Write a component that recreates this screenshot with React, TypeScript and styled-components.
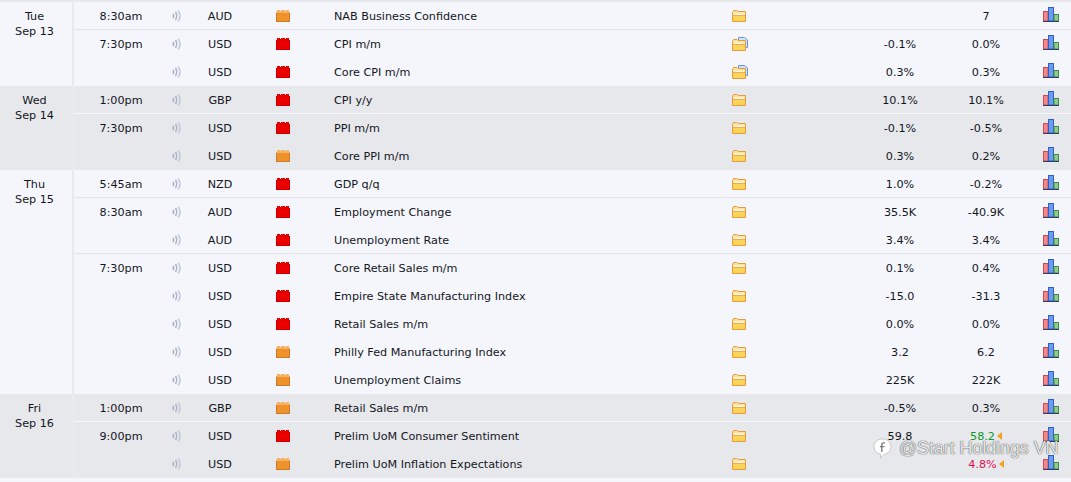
import styled, { createGlobalStyle } from 'styled-components';

const GlobalStyle = createGlobalStyle`
  html, body {
    margin: 0;
    padding: 0;
    width: 1071px;
    height: 482px;
    overflow: hidden;
    background: #f5f6fb;
  }
`;

const Page = styled.div`
  position: relative;
  width: 1071px;
  height: 482px;
  overflow: hidden;
  padding-top: 2px;
  box-sizing: border-box;
  background: #f5f6fb;
  color: #14161e;
  font-family: 'DejaVu Sans', sans-serif;
  font-size: 11.2px;
`;

const TopStrip = styled.div`
  position: absolute;
  top: 0;
  left: 0;
  right: 0;
  height: 2px;
  background: #e7e8ec;
`;

const DayGroup = styled.section<{ $dark?: boolean }>`
  display: flex;
  background: ${p => (p.$dark ? '#e7e8ec' : '#f5f6fb')};
`;

const DayCell = styled.div`
  box-sizing: border-box;
  width: 74px;
  flex: none;
  padding-top: 7px;
  padding-right: 3px;
  border-right: 2px solid #e9eaf0;
  text-align: center;
  line-height: 15px;
`;

const Slots = styled.div`
  flex: 1;
`;

const TimeGroup = styled.div<{ $dark?: boolean; $divided?: boolean }>`
  ${p =>
    p.$divided
      ? `border-top: 1px solid ${p.$dark ? '#f7f8fc' : '#e3e4ea'}; margin-top: -1px;`
      : ''}
`;

const Row = styled.div`
  display: grid;
  grid-template-columns: 94px 16px 72px 78px 398px 132px 72px 100px 1fr;
  align-items: center;
  height: 28px;
`;

const Time = styled.div`
  text-align: center;
  white-space: nowrap;
`;

const Centered = styled.div`
  display: flex;
  justify-content: center;
  align-items: center;
  white-space: nowrap;
`;

const ImpactCell = styled.div`
  display: flex;
  padding-left: 20px;
`;

const Name = styled.div`
  white-space: nowrap;
`;

const IconCell = styled.div`
  display: flex;
  align-items: center;
`;

const ChartCell = styled(IconCell)`
  padding-left: 7px;
  margin-top: -4px;
`;

const Forecast = styled(Centered)<{ $tone?: string }>`
  color: ${p => p.$tone || 'inherit'};
`;

const Arrow = styled.span`
  width: 0;
  height: 0;
  margin-left: 2px;
  border-top: 4px solid transparent;
  border-bottom: 4px solid transparent;
  border-right: 5px solid #f2a11f;
`;

const Watermark = styled.div`
  position: absolute;
  left: 873px;
  top: 438px;
  display: flex;
  align-items: center;
  gap: 7px;
  color: rgba(255, 255, 255, 0.9);
  font-family: 'Liberation Sans', sans-serif;
  font-size: 17.8px;
  white-space: nowrap;
  text-shadow: 0 0 1px rgba(50, 50, 50, 0.9), 0 0 1px rgba(50, 50, 50, 0.7);
`;

function SoundIcon() {
  return (
    <svg width="9" height="12" viewBox="0 0 9 12" fill="none">
      <path d="M1 4C1.8 5.2 1.8 6.8 1 8" stroke="#a9b3c5" strokeWidth="1.7" />
      <path d="M3.5 2C5 4.2 5 7.8 3.5 10" stroke="#aab4c6" strokeWidth="1.6" />
      <path d="M6.2 0.6C8.4 3.8 8.4 8.2 6.2 11.4" stroke="#bcc4d2" strokeWidth="1.4" />
    </svg>
  );
}

function ImpactIcon({ high }: { high?: boolean }) {
  const fill = high ? '#ea0000' : '#ef9229';
  const edge = high ? '#c80000' : '#c97a2c';
  return (
    <svg width="14" height="12" viewBox="0 0 14 12">
      <path d="M0 2H1V0H4V1H5V0H9V1H10V0H13V2H14V12H0Z" fill={fill} />
      <path d="M0 2H1V0H4V1H5V0H9V1H10V0H13V2H14V3H0Z" fill={high ? '#e00000' : '#f4b266'} />
      <path d="M0.5 3V11.5H13.5V3" fill="none" stroke={edge} />
    </svg>
  );
}

function FolderIcon({ doc }: { doc?: boolean }) {
  return (
    <svg width="16" height="14" viewBox="0 0 16 14">
      {doc && <path d="M6.5 0.5H12.5L15.5 3V10.5H6.5Z" fill="#cfe2fa" stroke="#6f94d6" />}
      <g transform={doc ? 'translate(0 2)' : 'translate(0 1)'}>
        <path d="M0.5 2.5V11.5H13.5V1.5H6L5 0.5H1.5Z" fill="#fde3a0" stroke="#e89a3c" />
        <path d="M1.5 3.5H12.5V5H1.5Z" fill="#fff6d6" />
        <path d="M1 6H13V11H1Z" fill="#fbd45a" />
        <path d="M1 5.5H13" stroke="#e8ad58" />
      </g>
    </svg>
  );
}

function ChartIcon() {
  return (
    <svg width="16" height="15" viewBox="0 0 16 15">
      <rect x="0.5" y="4.5" width="4.5" height="9.5" fill="#f08a8a" stroke="#cf4a55" />
      <rect x="5.5" y="0.5" width="5" height="13.5" fill="#6f9ce8" stroke="#2f5fd0" />
      <rect x="11" y="7.5" width="4.5" height="6.5" fill="#8fce8a" stroke="#3f8a4a" />
      <path d="M0 14.5H16" stroke="#27406f" />
    </svg>
  );
}

function FacebookBubble() {
  return (
    <svg width="19" height="21" viewBox="0 0 19 21">
      <path
        d="M9.5 1C4.6 1 1 4.3 1 8.6C1 12.6 3.8 15.4 7.4 16.1V20L11.6 16.2C15.4 15.6 18 12.6 18 8.6C18 4.3 14.4 1 9.5 1Z"
        fill="#ffffff"
        stroke="#9a9aa0"
        strokeWidth="0.5"
      />
      <path d="M12 4.8H10.6C9.4 4.8 8.8 5.5 8.8 6.6V14M7 8.6H11.4" stroke="#77777e" strokeWidth="1.3" fill="none" />
    </svg>
  );
}

type Ev = {
  cur: string;
  high?: boolean;
  name: string;
  doc?: boolean;
  actual?: string;
  forecast: string;
  tone?: string;
  arrow?: boolean;
};
type Slot = { time: string; events: Ev[] };
type Day = { day: string; date: string; dark?: boolean; slots: Slot[] };

const days: Day[] = [
  {
    day: 'Tue',
    date: 'Sep 13',
    slots: [
      { time: '8:30am', events: [{ cur: 'AUD', name: 'NAB Business Confidence', forecast: '7' }] },
      {
        time: '7:30pm',
        events: [
          { cur: 'USD', high: true, name: 'CPI m/m', doc: true, actual: '-0.1%', forecast: '0.0%' },
          { cur: 'USD', high: true, name: 'Core CPI m/m', doc: true, actual: '0.3%', forecast: '0.3%' },
        ],
      },
    ],
  },
  {
    day: 'Wed',
    date: 'Sep 14',
    dark: true,
    slots: [
      { time: '1:00pm', events: [{ cur: 'GBP', high: true, name: 'CPI y/y', actual: '10.1%', forecast: '10.1%' }] },
      {
        time: '7:30pm',
        events: [
          { cur: 'USD', high: true, name: 'PPI m/m', actual: '-0.1%', forecast: '-0.5%' },
          { cur: 'USD', name: 'Core PPI m/m', actual: '0.3%', forecast: '0.2%' },
        ],
      },
    ],
  },
  {
    day: 'Thu',
    date: 'Sep 15',
    slots: [
      { time: '5:45am', events: [{ cur: 'NZD', high: true, name: 'GDP q/q', actual: '1.0%', forecast: '-0.2%' }] },
      {
        time: '8:30am',
        events: [
          { cur: 'AUD', high: true, name: 'Employment Change', actual: '35.5K', forecast: '-40.9K' },
          { cur: 'AUD', high: true, name: 'Unemployment Rate', actual: '3.4%', forecast: '3.4%' },
        ],
      },
      {
        time: '7:30pm',
        events: [
          { cur: 'USD', high: true, name: 'Core Retail Sales m/m', actual: '0.1%', forecast: '0.4%' },
          { cur: 'USD', high: true, name: 'Empire State Manufacturing Index', actual: '-15.0', forecast: '-31.3' },
          { cur: 'USD', high: true, name: 'Retail Sales m/m', actual: '0.0%', forecast: '0.0%' },
          { cur: 'USD', name: 'Philly Fed Manufacturing Index', actual: '3.2', forecast: '6.2' },
          { cur: 'USD', name: 'Unemployment Claims', actual: '225K', forecast: '222K' },
        ],
      },
    ],
  },
  {
    day: 'Fri',
    date: 'Sep 16',
    dark: true,
    slots: [
      { time: '1:00pm', events: [{ cur: 'GBP', name: 'Retail Sales m/m', actual: '-0.5%', forecast: '0.3%' }] },
      {
        time: '9:00pm',
        events: [
          { cur: 'USD', high: true, name: 'Prelim UoM Consumer Sentiment', actual: '59.8', forecast: '58.2', tone: '#0a9a2a', arrow: true },
          { cur: 'USD', name: 'Prelim UoM Inflation Expectations', forecast: '4.8%', tone: '#e0104f', arrow: true },
        ],
      },
    ],
  },
];

export default function App() {
  return (
    <Page>
      <GlobalStyle />
      <TopStrip />
      {days.map(d => (
        <DayGroup key={d.date} $dark={d.dark}>
          <DayCell>
            <div>{d.day}</div>
            <div>{d.date}</div>
          </DayCell>
          <Slots>
            {d.slots.map((s, si) => (
              <TimeGroup key={s.time} $dark={d.dark} $divided={si > 0}>
                {s.events.map((e, i) => (
                  <Row key={e.name}>
                    <Time>{i === 0 ? s.time : ''}</Time>
                    <Centered>
                      <SoundIcon />
                    </Centered>
                    <Centered>{e.cur}</Centered>
                    <ImpactCell>
                      <ImpactIcon high={e.high} />
                    </ImpactCell>
                    <Name>{e.name}</Name>
                    <IconCell>
                      <FolderIcon doc={e.doc} />
                    </IconCell>
                    <Centered>{e.actual}</Centered>
                    <Forecast $tone={e.tone}>
                      {e.forecast}
                      {e.arrow && <Arrow />}
                    </Forecast>
                    <ChartCell>
                      <ChartIcon />
                    </ChartCell>
                  </Row>
                ))}
              </TimeGroup>
            ))}
          </Slots>
        </DayGroup>
      ))}
      <Watermark>
        <FacebookBubble />
        <span>@Start Holdings VN</span>
      </Watermark>
    </Page>
  );
}
